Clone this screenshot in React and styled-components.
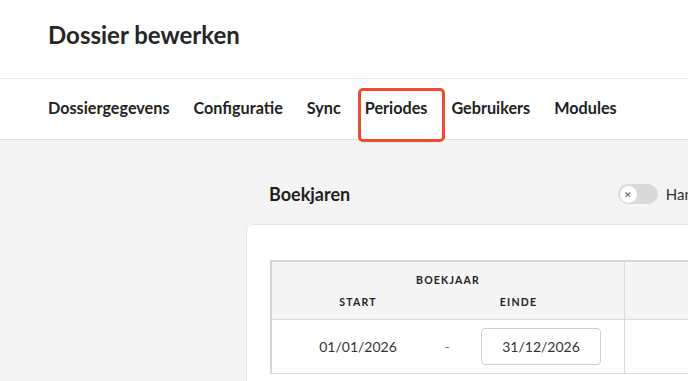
import React from "react";
import styled, { createGlobalStyle } from "styled-components";

const Global = createGlobalStyle`
  html, body { margin: 0; padding: 0; height: 100%; overflow: hidden; }
  body { font-family: Lato, "Open Sans", sans-serif; background: #f4f4f4; color: #222; }
  * { box-sizing: border-box; }
`;

const Page = styled.div`
  width: 100%;
  height: 381px;
  overflow: hidden;
  display: flex;
  flex-direction: column;
`;

const Header = styled.header`
  height: 79px;
  background: #fff;
  border-bottom: 1px solid #ebebeb;
  padding: 20px 0 0 48px;
  flex-shrink: 0;
`;

const Title = styled.h1`
  margin: 0;
  font-size: 24px;
  font-weight: 700;
  line-height: 29px;
  color: #262626;
`;

const Tabs = styled.nav`
  height: 61px;
  background: #fff;
  border-bottom: 1px solid #e0e0e0;
  display: flex;
  align-items: center;
  gap: 24px;
  padding: 0 0 0 48px;
  flex-shrink: 0;
`;

const Tab = styled.span`
  position: relative;
  font-size: 16.2px;
  font-weight: 700;
  color: #222;
  line-height: 20px;
  margin-top: -3px;
`;

const Highlight = styled.span`
  position: absolute;
  left: -7px;
  right: -18px;
  top: -10px;
  bottom: -24px;
  border: 3px solid #f04b2c;
  border-radius: 5px;
  pointer-events: none;
`;

const Main = styled.main`
  flex: 1;
  padding: 42px 0 0 246px;
  width: 1000px;
`;

const SectionHead = styled.div`
  display: flex;
  align-items: center;
  justify-content: space-between;
  padding: 0 0 0 23px;
  width: 442px;
  height: 24px;
`;

const SectionTitle = styled.h2`
  margin: 0;
  font-size: 18px;
  font-weight: 700;
  color: #1f1f1f;
`;

const ToggleWrap = styled.div`
  display: flex;
  align-items: center;
  gap: 8px;
  font-size: 15px;
  color: #333;
  margin-right: -50px;
`;

const Track = styled.span`
  width: 40px;
  height: 20px;
  border-radius: 10px;
  background: #d9d9d9;
  display: flex;
  align-items: center;
  padding-left: 2px;
`;

const Knob = styled.span`
  width: 17px;
  height: 17px;
  border-radius: 50%;
  background: #fff;
  display: flex;
  align-items: center;
  justify-content: center;
  font-size: 9px;
  line-height: 1;
  color: #555;
`;

const Card = styled.section`
  margin-top: 18px;
  background: #fff;
  border: 1px solid #e4e4e4;
  border-radius: 7px;
  padding: 35px 0 0 23px;
  height: 300px;
`;

const Table = styled.div`
  display: grid;
  grid-template-columns: 353px 300px;
  border-top: 2px solid #d6d6d6;
  border-left: 2px solid #d6d6d6;
`;

const HeadCell = styled.div`
  background: #f5f5f5;
  height: 58px;
  border-bottom: 1px solid #dcdcdc;
  border-right: 1px solid #dcdcdc;
  padding-top: 11px;
`;

const BodyCell = styled.div`
  height: 54px;
  border-bottom: 1px solid #dcdcdc;
  border-right: 1px solid #dcdcdc;
  display: grid;
  grid-template-columns: 172px 6px 175px;
  align-items: center;
`;

const HeadLabel = styled.div`
  font-size: 10.5px;
  font-weight: 700;
  letter-spacing: 1.2px;
  color: #222;
  text-align: center;
  line-height: 14px;
  padding-right: ${(p) => p.$pr || 0}px;
`;

const SubHead = styled.div`
  display: grid;
  grid-template-columns: 172px 6px 175px;
  margin-top: 8px;
`;

const DateText = styled.div`
  font-size: 14px;
  color: #333;
  text-align: center;
`;

const Dash = styled.div`
  font-size: 14px;
  color: #777;
  text-align: center;
`;

const DateInput = styled.div`
  margin-left: 31px;
  width: 120px;
  height: 37px;
  border: 1px solid #cfcfcf;
  border-radius: 4px;
  font-size: 14px;
  color: #333;
  display: flex;
  align-items: center;
  justify-content: center;
`;

export default function App() {
  return (
    <Page>
      <Global />
      <Header>
        <Title>Dossier bewerken</Title>
      </Header>
      <Tabs>
        <Tab>Dossiergegevens</Tab>
        <Tab>Configuratie</Tab>
        <Tab>Sync</Tab>
        <Tab>
          Periodes
          <Highlight />
        </Tab>
        <Tab>Gebruikers</Tab>
        <Tab>Modules</Tab>
      </Tabs>
      <Main>
        <SectionHead>
          <SectionTitle>Boekjaren</SectionTitle>
          <ToggleWrap>
            <Track>
              <Knob>✕</Knob>
            </Track>
            <span>Handmatig</span>
          </ToggleWrap>
        </SectionHead>
        <Card>
          <Table>
            <HeadCell>
              <HeadLabel>BOEKJAAR</HeadLabel>
              <SubHead>
                <HeadLabel>START</HeadLabel>
                <span />
                <HeadLabel $pr={38}>EINDE</HeadLabel>
              </SubHead>
            </HeadCell>
            <HeadCell />
            <BodyCell>
              <DateText>01/01/2026</DateText>
              <Dash>-</Dash>
              <DateInput>31/12/2026</DateInput>
            </BodyCell>
            <BodyCell />
          </Table>
        </Card>
      </Main>
    </Page>
  );
}
